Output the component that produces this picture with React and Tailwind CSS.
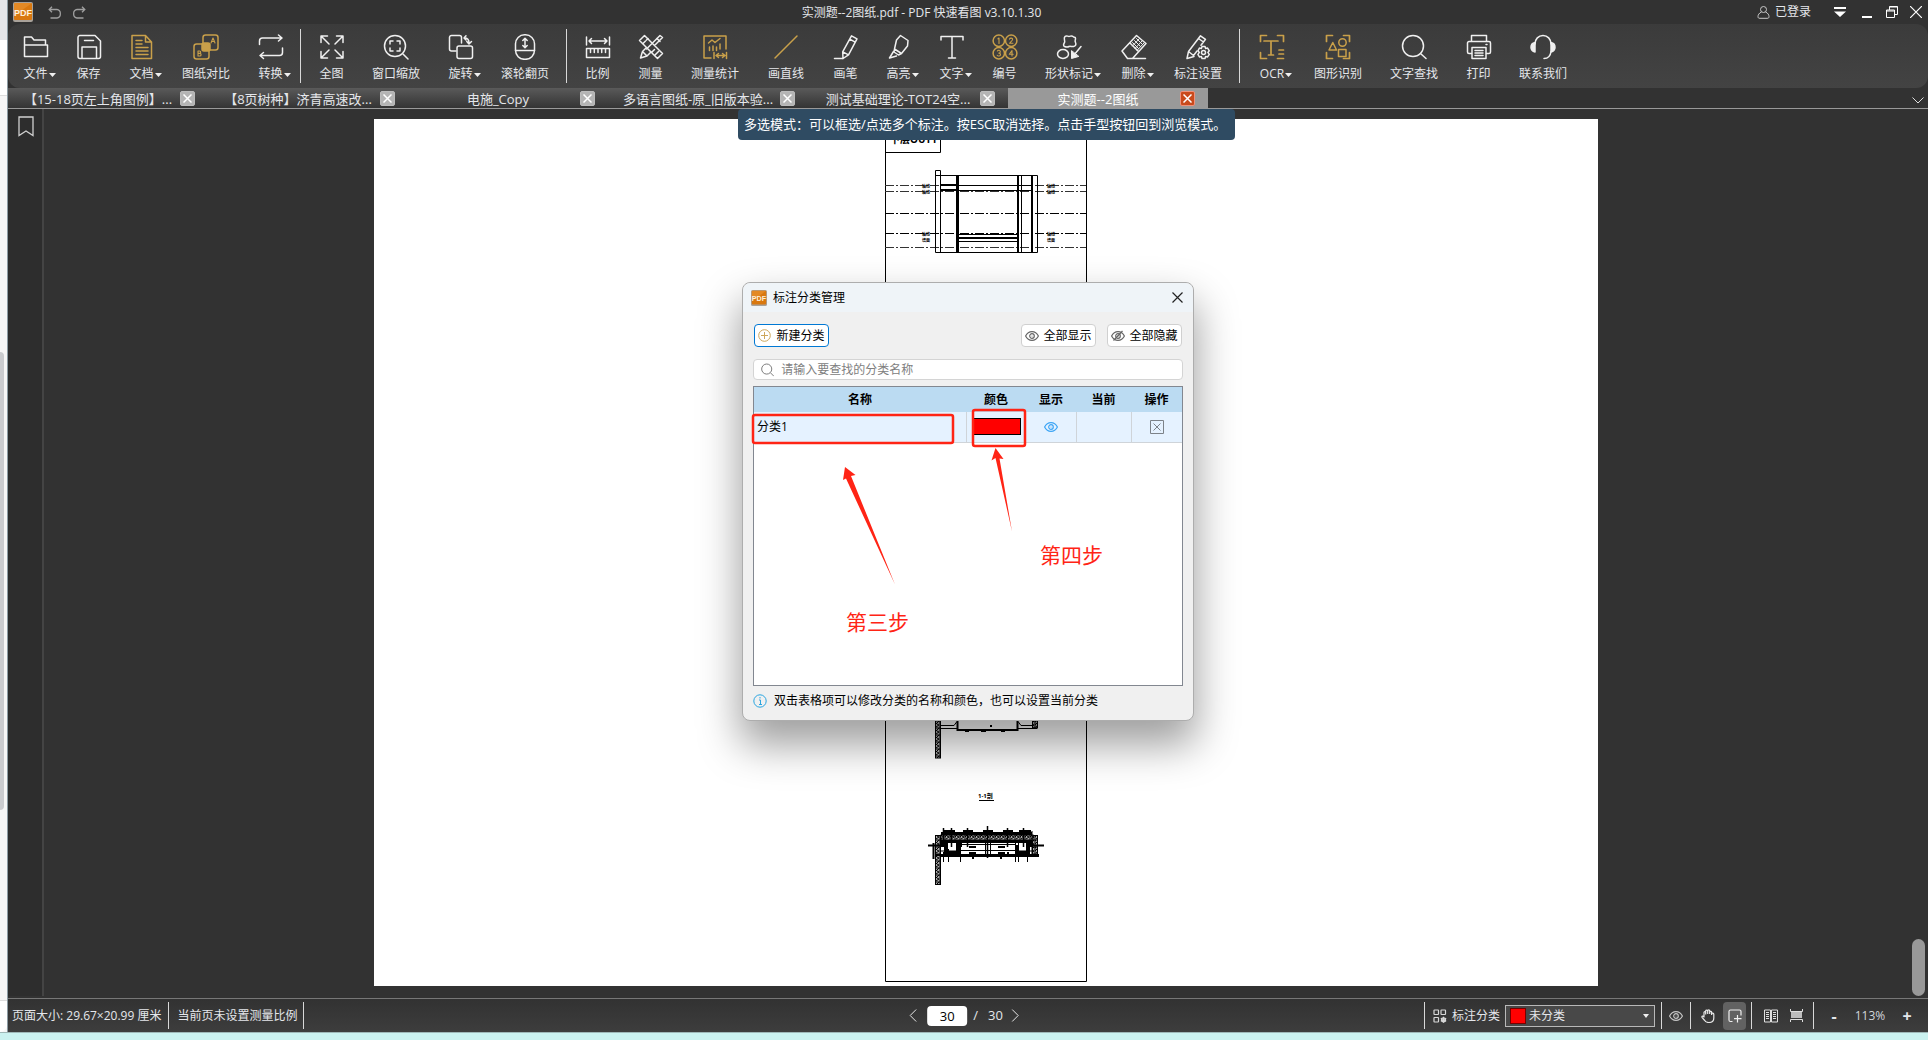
import { useState } from "react";

const GOLD = "#c9a04a";

function Icon({ size = 26, gold, children, ...rest }) {
  return (
    <svg
      width={size}
      height={size}
      viewBox="0 0 26 26"
      fill="none"
      stroke={gold ? GOLD : "#f0f0f0"}
      strokeWidth="1.5"
      strokeLinecap="round"
      strokeLinejoin="round"
      aria-hidden="true"
      {...rest}
    >
      {children}
    </svg>
  );
}

const icons = {
  file: <path d="M1.500 22.500V3h7l2.500 3h11.500v5M1.500 11h23v11.500h-23z" />,
  save: (
    <>
      <path d="M4 1.500h15l5.500 5.500v15.500a2 2 0 0 1-2 2h-18.500a2 2 0 0 1-2-2v-19a2 2 0 0 1 2-2z" />
      <path d="M6 24v-11h14.500v11M8.500 6.500h9" />
    </>
  ),
  doc: (
    <>
      <path d="M3 1.500h13.500l6 6.500v16.500h-19.500zM16.500 1.500v6.500h6" />
      <path d="M7 6.500h6M7 10h6M7 13.500h12M7 17h12M7 20.500h12" />
    </>
  ),
  compare: (
    <>
      <rect x="10" y="1" width="15" height="15" rx="2.500" />
      <rect x="1" y="10" width="15" height="15" rx="2.500" />
      <rect x="9" y="9" width="8" height="8" rx="2" fill={GOLD} />
      <path d="M18 9l2-5 2 5M18.700 7.500h2.600M5 17v5h1.800a1.300 1.300 0 0 0 0-2.600H5h1.500a1.200 1.200 0 0 0 0-2.400z" strokeWidth="1.100" />
    </>
  ),
  convert: (
    <>
      <path d="M1.500 10.500V7a3 3 0 0 1 3-3h19M20.500 1l3.500 3-3.500 3" />
      <path d="M24.500 14v4.500a3 3 0 0 1-3 3h-19M5.500 18.500L2 21.500l3.500 3" />
    </>
  ),
  full: <path d="M10 10L2 2M2 8.500V2h6.500M16 10l8-8M17.500 2H24v6.500M10 16l-8 8M2 17.500V24h6.500M16 16l8 8M24 17.500V24h-6.500" />,
  windowZoom: (
    <>
      <circle cx="12" cy="12" r="10.500" />
      <path d="M20 20l5 5M7 10V7h3M14 7h3v3M7 14v3h3M17 14v3h-3" />
    </>
  ),
  rotate: (
    <>
      <path d="M8 17H3.500a2 2 0 0 1-2-2V3.500a2 2 0 0 1 2-2h8a2 2 0 0 1 2 2V9" />
      <rect x="9" y="12" width="15.500" height="12.500" rx="2" />
      <path d="M16.500 4c3 0 4.500 2 4.500 5M18.800 7.500l2.200 2.500 2.500-2.500M18 1.800L16 4l2 2" />
    </>
  ),
  wheel: (
    <>
      <rect x="3.500" y="0.800" width="19" height="24.500" rx="9" />
      <path d="M3.500 16.500h19M13 4.500v9M10.800 6.500L13 4.200l2.200 2.300M10.800 11.500l2.200 2.300 2.200-2.300" />
    </>
  ),
  scale: (
    <>
      <path d="M1.500 3v8M24.500 3v8M4 7h18M6.500 4.500L4 7l2.500 2.500M19.500 4.500L22 7l-2.500 2.500" />
      <path d="M1.500 14.500h23v9h-23zM5.500 15v3.500M9.300 15v3.500M13 15v3.500M16.700 15v3.500M20.500 15v3.500" />
    </>
  ),
  measure: (
    <>
      <path d="M9.500 14.500L1.500 6.500l5-5 8 8M16.500 11.500L24.500 3.500l-2.500-2L8.500 15M14.500 9.500l10 10-5 5-10-10" />
      <path d="M5 9.500L7.500 7M8.500 6L10 4.500M14 18l2.500-2.500M17 21l3.500-3.500M19 4.500l3 3M4.500 17.500L2.500 24l6.500-2 4-4M4.500 17.500l4.500 4.500M4.500 17.500L8 14" />
    </>
  ),
  stats: (
    <>
      <path d="M9 24H2V2h22v13" />
      <path d="M6.500 9l3.500-3 3 2.500 5-4M7.500 13v3.500M11 12v4.500M14.500 13v3.500M18 10v5M12 18.500v6M24.500 18.500v6M14 21.500h9M16.500 19.500l-2.500 2 2.500 2M20.500 19.500l2.500 2-2.500 2" />
    </>
  ),
  line: <path d="M2 24L24 2" />,
  pen: (
    <>
      <path d="M18.500 1.800l5.500 3-8.500 16-5.500 3.700-.3-6.700zM9.800 17.800l5.700 3M16.800 5.200l5.400 3" />
      <path d="M1.500 24.500h8.500" />
    </>
  ),
  highlight: (
    <>
      <path d="M14.500 1.500l7.500 5-.5 5.500-6 7.500-7-4.500 2-9zM8.500 15l7 4.500-3 1.500-4.500-3z" />
      <path d="M7.500 17.500l-4 6.500 7-2" />
    </>
  ),
  text: <path d="M2 6V2.500h22V6M13 2.500v21M9.500 24h7" />,
  number: (
    <>
      <circle cx="6.800" cy="6.800" r="5.700" />
      <circle cx="19.200" cy="6.800" r="5.700" />
      <circle cx="6.800" cy="19.200" r="5.700" />
      <circle cx="19.200" cy="19.200" r="5.700" />
      <path
        d="M6 4.800l1-.8v5.500M17.500 5.200c.5-1.600 3.300-1.400 3.100.3-.2 1.300-2 2.300-3 3.800h3.300M5.400 17c.7-1.200 2.900-1 2.900.7 0 1-.9 1.400-1.500 1.400 1 0 1.700.6 1.700 1.400 0 1.800-2.500 2-3.300.8M20 22v-5.500l-2.700 3.800h3.900"
        strokeWidth="1.100"
      />
    </>
  ),
  shape: (
    <>
      <path d="M9 2.500c1.500-1.500 2.500 0 4 0s2.500-1.500 4 0 2.500 0 2.500 2-1 2 0 4 0 3.500-2 4-3-.8-4.500 0-3 .5-4.500 0-1-2.500 0-4-1.500-4 .5-6z" />
      <ellipse cx="7" cy="20" rx="5.500" ry="4.500" />
      <path d="M25 12.500L18 21" />
      <path d="M15.500 17V24.500l7-2z" fill="#f0f0f0" strokeWidth="1" />
    </>
  ),
  erase: (
    <>
      <path d="M1 17L15.500 1.500l9.500 8L11.500 24.500H6.500zM9 9l8.500 8.500M11.500 24.500h13" />
      <path d="M15.500 4.500l6 6M13.500 6.500l6 6M11.500 8.500l6 6M18.500 4.500l-7 7.500M21 7l-7 7.500M23 9l-7 7.500" strokeWidth="1" />
    </>
  ),
  annotate: (
    <>
      <path d="M9 22.500l-7 2 1.500-7L15.500 1.800l5 3.500-4.500 6M13.500 4.500l5 3.500M3.500 17.500l5 4 3.500-4.500" />
      <circle cx="18.500" cy="18.500" r="2" />
      <path d="M17 12.500h3l.6 2 2-.4 1.700 2.700-1.500 1.600 1.500 2-1.700 2.500-2-.4-.6 2h-3l-.6-2-2 .4-1.500-2.500 1.500-2-1.500-1.600 1.500-2.700 2 .4z" />
    </>
  ),
  ocr: (
    <path d="M1.500 7.500v-6h6M18.500 1.500h6v6M1.500 18.500v6h6M18.500 24.500h6M5 7h14M12 7v14M20 16h4.500M20 20h4.500M9.500 21h5" strokeWidth="1.700" />
  ),
  shapes: (
    <>
      <path d="M1.500 7.500v-6h6M18.500 1.500h6v6M1.500 18.500v6h6M18.500 24.500h6v-6" strokeWidth="1.700" />
      <circle cx="17.500" cy="8.500" r="3.700" />
      <path d="M4 16l3.800-7.500L11.500 16zM13.500 15.500h7.500v7h-7.500z" />
    </>
  ),
  search: (
    <>
      <circle cx="12" cy="12" r="10.500" />
      <path d="M19.500 19.500l5.500 5" />
    </>
  ),
  print: (
    <>
      <path d="M5.500 7V1.500h15V7M5.500 19.500H3a1.500 1.500 0 0 1-1.500-1.500V9A1.500 1.500 0 0 1 3 7.500h20A1.500 1.500 0 0 1 24.500 9v9a1.500 1.500 0 0 1-1.500 1.500h-2.500" />
      <path d="M6 13.500h14v11H6zM9 16.500h8M9 19h8M9 21.500h8M20 10.500h1" />
    </>
  ),
  contact: (
    <>
      <path d="M5 10C5 5 8.500 1.500 13 1.500S21 5 21 10M21 17.500c-.5 4-3 7-7 7" />
      <path d="M5 8.500v9.500c-2.500-.5-4-2.500-4-4.700S2.500 9 5 8.500zM21 8.500v9.500c2.500-.5 4-2.500 4-4.700S23.500 9 21 8.500z" fill="#f0f0f0" />
    </>
  ),
};

const groups = [
  [
    { label: "文件", icon: "file", menu: true },
    { label: "保存", icon: "save" },
    { label: "文档", icon: "doc", menu: true, gold: true },
    { label: "图纸对比", icon: "compare", gold: true },
    { label: "转换", icon: "convert", menu: true },
  ],
  [
    { label: "全图", icon: "full" },
    { label: "窗口缩放", icon: "windowZoom" },
    { label: "旋转", icon: "rotate", menu: true },
    { label: "滚轮翻页", icon: "wheel" },
  ],
  [
    { label: "比例", icon: "scale" },
    { label: "测量", icon: "measure" },
    { label: "测量统计", icon: "stats", gold: true },
    { label: "画直线", icon: "line", gold: true, width: "w-[66px]" },
    { label: "画笔", icon: "pen" },
    { label: "高亮", icon: "highlight", menu: true },
    { label: "文字", icon: "text", menu: true },
    { label: "编号", icon: "number", gold: true },
    { label: "形状标记", icon: "shape", menu: true },
    { label: "删除", icon: "erase", menu: true },
    { label: "标注设置", icon: "annotate" },
  ],
  [
    { label: "OCR", icon: "ocr", menu: true, gold: true, width: "w-14" },
    { label: "图形识别", icon: "shapes", gold: true },
    { label: "文字查找", icon: "search" },
    { label: "打印", icon: "print" },
    { label: "联系我们", icon: "contact" },
  ],
];

const toolWidth = { 2: "w-[53px]", 4: "w-[76px]" };

const tabs = [
  "【15-18页左上角图例】...",
  "【8页树种】济青高速改...",
  "电施_Copy",
  "多语言图纸-原_旧版本验...",
  "测试基础理论-TOT24空...",
  "实测题--2图纸",
];

function Logo({ size }) {
  return (
    <svg width={size} height={size} viewBox="0 0 20 20" aria-hidden="true">
      <rect width="20" height="20" rx="2" fill="#a9a29a" />
      <rect x="1" y="1" width="18" height="17" rx="1" fill="#d9780f" />
      <path d="M1 1h18L1 14z" fill="#ee9a3c" opacity="0.5" />
      <text x="10" y="14" textAnchor="middle" fontSize="9" fontWeight="700" fill="#fdf0dc" fontFamily="Liberation Sans, sans-serif">
        PDF
      </text>
    </svg>
  );
}

function Eye({ color, off }) {
  return (
    <svg width="14" height="14" viewBox="0 0 14 14" fill="none" stroke={color} strokeWidth="1.200" aria-hidden="true">
      <path d="M.6 7C3.500 1.200 10.500 1.200 13.400 7 10.500 12.800 3.500 12.800.6 7z" />
      <circle cx="7" cy="7" r="2.300" />
      <circle cx="7" cy="7" r="0.500" fill={color} stroke="none" />
      {off && <path d="M2.500 11.500l9-9.500" />}
    </svg>
  );
}

function TitleBar() {
  return (
    <header className="flex h-6 items-center bg-[#323232] pl-[5px] pr-[6px] text-gray-200">
      <div className="flex items-center gap-3">
        <Logo size={20} />
        <button aria-label="撤销" className="ml-[3px]">
          <svg width="13" height="13" viewBox="0 0 13 13" fill="none" stroke="#a0a0a0" strokeWidth="1.300">
            <path d="M4 .7L1.200 3.500 4 6.300M1.200 3.500H9a3.500 3.500 0 0 1 3.300 3.800V8.200A3.500 3.500 0 0 1 9 12H2.500" />
          </svg>
        </button>
        <button aria-label="重做">
          <svg width="13" height="13" viewBox="0 0 13 13" fill="none" stroke="#a0a0a0" strokeWidth="1.300">
            <path d="M9 .7l2.800 2.800L9 6.300M11.800 3.500H4A3.500 3.500 0 0 0 .7 7.300v.9A3.500 3.500 0 0 0 4 12h6.500" />
          </svg>
        </button>
      </div>
      <h1 className="min-w-0 flex-1 truncate pt-px text-center">实测题--2图纸.pdf - PDF 快速看图 v3.10.1.30</h1>
      <div className="flex items-center">
        <button className="mr-[23px] flex items-center gap-[5px]">
          <svg width="13" height="13" viewBox="0 0 13 13" fill="none" stroke="#c8c8c8">
            <circle cx="6.500" cy="3.500" r="3" />
            <path d="M4.500 6C2 7 1 9 1 10.500S1.500 12.300 3 12.300h7c1.500 0 2-.3 2-1.800S11 7 8.500 6" />
          </svg>
          已登录
        </button>
        <button aria-label="菜单" className="mr-4">
          <svg width="12" height="12" viewBox="0 0 12 12" fill="#fff">
            <path d="M0 1h12v2H0zM0 5.500h12L6 11z" />
          </svg>
        </button>
        <button aria-label="最小化" className="mr-[14px]">
          <svg width="10" height="12" viewBox="0 0 10 12">
            <path d="M0 10h10v2H0z" fill="#fff" />
          </svg>
        </button>
        <button aria-label="还原" className="mr-3">
          <svg width="12" height="12" viewBox="0 0 12 12" fill="none" stroke="#fff">
            <path d="M3.500 4V.5h8v8H8.500M3.500 1h8M.5 4h8v7.500h-8zM.5 5h8" />
          </svg>
        </button>
        <button aria-label="关闭">
          <svg width="12" height="12" viewBox="0 0 12 12" stroke="#fff" strokeWidth="1.200">
            <path d="M0 0l12 12M12 0L0 12" />
          </svg>
        </button>
      </div>
    </header>
  );
}

function ToolBar() {
  return (
    <div className="bg-[#323232]">
      <nav className="flex h-16 items-stretch rounded-xl bg-linear-to-b from-[#3b3b3b] to-[#434343] pl-px">
        {groups.map((group, g) => (
          <div key={g} className="flex">
            {g > 0 && <div className="my-[5px] ml-[3px] mr-1 w-px bg-[#d8d8d8]" />}
            {group.map((tool) => (
              <button
                key={tool.label}
                className={`${tool.width || toolWidth[tool.label.length]} flex flex-col items-center gap-[6px] pt-[10px] text-gray-200`}
              >
                <Icon gold={tool.gold}>{icons[tool.icon]}</Icon>
                <span className="flex items-center whitespace-nowrap leading-4">
                  {tool.label}
                  {tool.menu && (
                    <svg width="7" height="4" viewBox="0 0 7 4" className="-mr-2 ml-px mt-[2px]" fill="#f0f0f0">
                      <path d="M0 0h7L3.500 4z" />
                    </svg>
                  )}
                </span>
              </button>
            ))}
          </div>
        ))}
      </nav>
    </div>
  );
}

function TabBar() {
  const [active, setActive] = useState(5);

  return (
    <div className="flex h-[21px] items-stretch justify-between border-b border-[#999] bg-[#323232] text-[13px]">
      <div className="flex">
        {tabs.map((tab, i) => (
          <div
            key={tab}
            className={`flex w-[200px] items-center ${i === active ? "bg-[#999] text-white" : "bg-linear-to-b from-[#5a5a5a] to-[#343434] text-gray-200"}`}
          >
            <button onClick={() => setActive(i)} className="min-w-0 flex-1 whitespace-nowrap pl-2 pt-[2px] text-center leading-5">
              {tab}
            </button>
            <button
              aria-label={`关闭 ${tab}`}
              className={`mr-[13px] flex size-[15px] items-center justify-center rounded-[2px] border ${i === active ? "border-[#f0907a] bg-[#c94a1c]" : "border-[#bbb] bg-[#b4b4b4]"}`}
            >
              <svg width="9" height="9" viewBox="0 0 9 9" stroke="#fff" strokeWidth="1.500">
                <path d="M.5.5l8 8M8.500.5l-8 8" />
              </svg>
            </button>
          </div>
        ))}
      </div>
      <button aria-label="更多标签" className="mr-[4px] pt-1">
        <svg width="12" height="7" viewBox="0 0 12 7" fill="none" stroke="#e0e0e0">
          <path d="M.5.5L6 6 11.500.5" />
        </svg>
      </button>
    </div>
  );
}

function SectionMarks({ x, y, lines }) {
  return (
    <text x={x} y={y} fontSize="4" fontWeight="700" fill="#000" stroke="none">
      {lines.map((line, i) => (
        <tspan key={i} x={x} dy={i ? 6 : 0}>
          {line}
        </tspan>
      ))}
    </text>
  );
}

function Drawing() {
  return (
    <svg width="202" height="867" viewBox="0 0 202 867" fill="none" stroke="#000" className="mx-auto block" aria-hidden="true">
      <defs>
        <pattern id="hatch" width="5" height="7" patternUnits="userSpaceOnUse">
          <rect width="5" height="7" fill="#aaa" />
          <path d="M0 4L4 0M1 6l3-2M0 1l1-1M2 3l2 1" stroke="#000" />
        </pattern>
      </defs>
      <path d="M.5 0v862.500h201V0M.5 33.500h55V0" />
      <text x="5" y="24" fontSize="10" fontWeight="700" fill="#000" stroke="none">
        下层OUT1
      </text>

      <g strokeDasharray="9 2 2 2">
        <path d="M0 66.500h201M0 72.500h201M0 128.500h201" stroke="#333" />
        <path d="M0 94.500h201M0 114.500h201" />
      </g>
      <path d="M50.500 51.500h5v82M50.500 51.500v82h102v-77h-102M71.500 56.500v77M136.500 56.500v77" />
      <path d="M73 56v77M133 56v77M147 56v77" strokeWidth="2" />
      <path d="M55 66.500h92M55 71.500h92M147.500 64v9" />
      <path d="M56 71h17M56 66h17" strokeWidth="2" />
      <path d="M73 115.500h59M73 122.500h59" />
      <path d="M73 119h59" strokeWidth="2" />
      <SectionMarks x={37} y={69} lines={["轴线", "轴线"]} />
      <SectionMarks x={162} y={69} lines={["轴线", "轴线"]} />
      <SectionMarks x={37} y={117} lines={["轴线", "墙面"]} />
      <SectionMarks x={162} y={117} lines={["轴线", "墙面"]} />

      <rect x="50.500" y="590" width="5" height="49" fill="url(#hatch)" />
      <rect x="147.500" y="590" width="5" height="19" fill="url(#hatch)" />
      <path d="M56 609.500h16M133 609.500h19M56 606.500h13l3-4M148 606.500h-12l-3-4" />
      <path d="M72.500 595v16h60v-16M80 612h4M96 612h5M116 612h4M105 607h2" strokeWidth="2" />

      <text x="93" y="679" fontSize="6" fontWeight="700" fill="#000" stroke="none">
        1-1剖
      </text>
      <path d="M94 681.500h15" />

      <rect x="50.500" y="716.500" width="5" height="49" fill="url(#hatch)" />
      <rect x="147.500" y="716.500" width="5" height="20" fill="url(#hatch)" />
      <rect x="56" y="716" width="92" height="6" fill="url(#hatch)" />
      <path d="M56 714.500h91M56 722.500h91" strokeWidth="3" />
      <path d="M58 712h12M78 712h10M98 712h10M118 712h10M134 712h12" strokeWidth="2" />
      <path d="M43 726.500h14M148 726.500h11M48.500 724v16M50 736h6" strokeWidth="2" />
      <path
        d="M58.500 709v14M66.500 709v19M82.500 709v19M102.500 707v32M122.500 709v19M138.500 709v19"
        strokeWidth="1.500"
      />
      <path d="M147 712v24M58.500 733v10M63.500 730v13M75.500 724v19M130.500 724v19M133.500 724v19M142.500 730v13M100.500 724v14M105.500 724v14" />
      <path d="M56 736.500h98" strokeWidth="3" />
      <path d="M75 731.500h56M76 725.500h54M56 732h16M132 732h16" />
      <path d="M56 726h5v8h12v-8h4M148 726h-5v8h-11v-8" strokeWidth="4" />
      <path d="M84 728h7M84 734h7M113 728h7M113 734h7M122 734h2M87 739h2M115 739h2" strokeWidth="2" />
    </svg>
  );
}

function CategoryDialog() {
  const [keyword, setKeyword] = useState("");
  const [open, setOpen] = useState(true);

  if (!open) return null;

  return (
    <section
      role="dialog"
      aria-labelledby="dialog-title"
      className="absolute left-1/2 top-[282px] w-[452px] -translate-x-1/2 rounded-lg border border-[#adadad] bg-[#f0f0f0] text-black shadow-[0_22px_42px_2px_rgba(0,0,0,0.38)]"
    >
      <header className="flex h-[29px] items-center rounded-t-lg bg-[#eff4f8] pl-2 pr-[10px]">
        <Logo size={16} />
        <h2 id="dialog-title" className="ml-[6px] flex-1">
          标注分类管理
        </h2>
        <button aria-label="关闭" onClick={() => setOpen(false)}>
          <svg width="11" height="11" viewBox="0 0 11 11" stroke="#222" strokeWidth="1.200">
            <path d="M.5.5l10 10M10.500.5l-10 10" />
          </svg>
        </button>
      </header>

      <div className="px-[10px] pb-[11px] pt-3">
        <div className="flex px-px">
          <button className="flex h-[23px] w-[75px] items-center justify-center gap-[5px] rounded border border-[#0078d4] bg-white">
            <svg width="13" height="13" viewBox="0 0 13 13" fill="none" stroke="#cda65a" aria-hidden="true">
              <circle cx="6.500" cy="6.500" r="5.800" />
              <path d="M3 6.500h7M6.500 3v7" />
            </svg>
            新建分类
          </button>
          <button className="ml-auto mr-[11px] flex h-[23px] w-[75px] items-center justify-center gap-1 rounded border border-[#d0d0d0] bg-white">
            <Eye color="#666" />
            全部显示
          </button>
          <button className="flex h-[23px] w-[75px] items-center justify-center gap-1 rounded border border-[#d0d0d0] bg-white">
            <Eye color="#666" off />
            全部隐藏
          </button>
        </div>

        <label className="mt-3 flex h-[21px] items-center gap-[7px] rounded-sm border border-[#d4d4d4] bg-white pl-[7px]">
          <svg width="14" height="14" viewBox="0 0 14 14" fill="none" stroke="#777" aria-hidden="true">
            <circle cx="6" cy="6" r="5.300" />
            <path d="M10 10l3.500 3.500" />
          </svg>
          <input
            aria-label="查找分类"
            value={keyword}
            onChange={(e) => setKeyword(e.target.value)}
            placeholder="请输入要查找的分类名称"
            className="w-full bg-transparent outline-none placeholder:text-[#808080]"
          />
        </label>

        <div className="mt-[6px] h-[300px] border border-[#828790] bg-white">
          <table className="w-full table-fixed border-collapse">
            <thead>
              <tr className="h-[25px] bg-[#bbdbf2]">
                <th className="w-[212px]">名称</th>
                <th className="w-[60px]">颜色</th>
                <th className="w-[50px]">显示</th>
                <th className="w-[55px]">当前</th>
                <th>操作</th>
              </tr>
            </thead>
            <tbody>
              <tr className="h-[30px] bg-[#e5f2ff]">
                <td className="border-b border-r border-[#cfd4d9] pl-[3px]">分类1</td>
                <td className="border-b border-[#cfd4d9] px-[5px]">
                  <div className="h-[17px] border border-black bg-[#ff0000]" />
                </td>
                <td className="border-b border-r border-[#cfd4d9]">
                  <button aria-label="显示" className="mx-auto block">
                    <Eye color="#3da5f5" />
                  </button>
                </td>
                <td className="border-b border-r border-[#cfd4d9]" />
                <td className="border-b border-[#cfd4d9]">
                  <button aria-label="删除分类" className="mx-auto block">
                    <svg width="14" height="14" viewBox="0 0 14 14" fill="none" stroke="#7c8288">
                      <path d="M.5.5h13v13H.5zM3.500 3.500l7 7M10.500 3.500l-7 7" />
                    </svg>
                  </button>
                </td>
              </tr>
            </tbody>
          </table>
        </div>

        <p className="mt-[7px] flex items-center gap-[7px]">
          <svg width="14" height="14" viewBox="0 0 14 14" fill="none" stroke="#2aa5e0" aria-hidden="true">
            <circle cx="7" cy="7" r="6.200" />
            <path d="M6 6h1.500v4M6 10.500h3M7 3v1.500" />
          </svg>
          双击表格项可以修改分类的名称和颜色，也可以设置当前分类
        </p>
      </div>

      <svg width="450" height="434" viewBox="743 283 450 434" className="pointer-events-none absolute inset-0 overflow-visible" aria-hidden="true">
        <g fill="none" stroke="#ff2415" strokeWidth="2.500">
          <rect x="753" y="415" width="200" height="28" rx="2" />
          <rect x="973" y="410" width="52" height="36" rx="2" />
        </g>
        <path d="M845 467l10.500 8-4.500 1 44 108.500L846 478.500l-3 1.500z" fill="#ff2415" />
        <path d="M995.500 448l8 11-4-.5 12.500 73-16.500-73.500-4 2.500z" fill="#ff2415" />
        <text x="846" y="630" fontSize="21" fill="#ff2415">
          第三步
        </text>
        <text x="1040" y="563" fontSize="21" fill="#ff2415">
          第四步
        </text>
      </svg>
    </section>
  );
}

function Viewer() {
  return (
    <main className="relative flex flex-1 items-stretch bg-[#323232]">
      <aside className="mb-[2px] w-9 border-r-2 border-[#444] bg-[#2d2d2d] pl-[10px] pt-[7px]">
        <button aria-label="书签">
          <svg width="16" height="21" viewBox="0 0 16 21" fill="none" stroke="#d0d0d0" strokeWidth="1.300">
            <path d="M1 1h14v18.500L8 15l-7 4.500z" />
          </svg>
        </button>
      </aside>
      <div className="relative flex-1 pb-3 pt-[10px]">
        <div className="mx-auto h-full w-[65%] bg-white">
          <Drawing />
        </div>
        <div className="absolute bottom-[2px] right-[3px] h-[57px] w-[13px] rounded-full bg-[#999]" />
      </div>
      <p className="absolute left-1/2 top-0 w-[497px] translate-x-[-230px] whitespace-nowrap rounded-sm bg-[#2f4b62] pl-[6px] text-[13px] leading-[31px] text-white">
        多选模式：可以框选/点选多个标注。按ESC取消选择。点击手型按钮回到浏览模式。
      </p>
    </main>
  );
}

function Divider() {
  return <div className="my-[3px] w-px self-stretch bg-[#d8d8d8]" />;
}

function StatusBar() {
  const [page, setPage] = useState("30");

  return (
    <footer className="relative flex h-[34px] items-center justify-between border-t border-[#777] bg-linear-to-b from-[#323232] to-[#3d3d3d] text-gray-200">
      <div className="flex items-center self-stretch pl-1">
        <span className="pt-px">页面大小: 29.67×20.99 厘米</span>
        <div className="ml-[7px] flex self-stretch">
          <Divider />
        </div>
        <span className="ml-2 mr-[6px] pt-px">当前页未设置测量比例</span>
        <Divider />
      </div>

      <div className="absolute left-1/2 flex -translate-x-1/2 items-center pr-2">
        <button aria-label="上一页" className="mr-[10px]">
          <svg width="8" height="13" viewBox="0 0 8 13" fill="none" stroke="#e8e8e8">
            <path d="M7 .5l-6 6 6 6" />
          </svg>
        </button>
        <input
          aria-label="页码"
          value={page}
          onChange={(e) => setPage(e.target.value)}
          className="h-5 w-10 rounded-sm bg-white text-center text-[13px] text-black outline-none"
        />
        <span className="ml-[6px] pt-px text-[13px]">/</span>
        <span className="ml-[10px] mr-2 pt-px text-[13px]">30</span>
        <button aria-label="下一页">
          <svg width="8" height="13" viewBox="0 0 8 13" fill="none" stroke="#e8e8e8">
            <path d="M1 .5l6 6-6 6" />
          </svg>
        </button>
      </div>

      <div className="flex items-center self-stretch">
        <Divider />
        <label htmlFor="category" className="ml-2 flex items-center gap-[5px] pt-px">
          <svg width="14" height="14" viewBox="0 0 14 14" fill="none" stroke="#d8d8d8" strokeWidth="1.200" aria-hidden="true">
            <rect x="1" y="1" width="4.500" height="4.500" rx="0.500" />
            <rect x="8" y="1" width="4.500" height="4.500" rx="0.500" />
            <rect x="1" y="8.500" width="4.500" height="4.500" rx="0.500" />
            <path d="M10.500 7.800v6M7.800 9.300l5.400 3M7.800 12.300l5.400-3" />
            <circle cx="10.500" cy="10.800" r="2" />
          </svg>
          标注分类
        </label>
        <div className="relative ml-[5px] flex items-center">
          <select id="category" className="h-[22px] w-[150px] appearance-none border border-[#b8b8b8] bg-[#484848] pl-[23px] leading-4 outline-none">
            <option>未分类</option>
            <option>分类1</option>
          </select>
          <span className="pointer-events-none absolute left-[5px] size-4 border border-[#700] bg-[#ff0000]" />
          <svg width="6" height="4" viewBox="0 0 6 4" fill="#f0f0f0" className="pointer-events-none absolute right-[6px]">
            <path d="M0 0h6L3 4z" />
          </svg>
        </div>
        <div className="ml-[6px] flex self-stretch">
          <Divider />
        </div>
        <button aria-label="显示标注" className="mx-[7px]">
          <Eye color="#c4c4c4" />
        </button>
        <Divider />
        <button aria-label="手型" className="ml-[10px] mr-2">
          <svg width="14" height="14" viewBox="0 0 14 14" fill="none" stroke="#e8e8e8" strokeWidth="1.200" strokeLinejoin="round">
            <path d="M3 8V3.500c0-1.200 1.700-1.200 1.700 0V2c0-1.200 2-1.200 2 0v-.3c0-1.200 2-1.200 2 0V3c0-1 1.900-1 1.900 0v2c0-1.200 2.200-1.200 2.200.2V9c0 3-2 4.500-5 4.500-2.500 0-3.700-1-4.500-2.500L1 8.300C.5 7 2 6.500 3 8z" />
            <path d="M4.700 3.500v2M6.700 2v3M8.700 3v2M10.600 4.500V6" />
          </svg>
        </button>
        <button aria-label="多选" className="mr-[5px] flex h-7 w-[23px] items-center justify-center rounded-sm bg-[#626262]">
          <svg width="14" height="14" viewBox="0 0 14 14" fill="none" stroke="#f0f0f0" strokeWidth="1.200">
            <path d="M4.500 12.500h-2c-1 0-1.500-.5-1.500-1.500V2.500C1 1.500 1.500 1 2.500 1h9c1 0 1.500.5 1.500 1.500v4M9.500 6v7.500M6 9.700h7.500" />
          </svg>
        </button>
        <Divider />
        <button aria-label="双页" className="mx-3">
          <svg width="14" height="14" viewBox="0 0 14 14" fill="none" stroke="#e0e0e0">
            <path d="M.5 1h6v12h-6zM7.500 1h6v12h-6zM2 3.500h3M2 5.500h3M2 7.500h3M2 9.500h3M9 3.500h3M9 5.500h3M9 7.500h3M9 9.500h3" />
          </svg>
        </button>
        <button aria-label="连续页" className="mr-[10px]">
          <svg width="13" height="13" viewBox="0 0 13 13" aria-hidden="true">
            <path d="M1 3h11v6H1z" fill="#bdbdbd" />
            <path d="M.5 0v2.500h12V0M.5 13v-2.500h12V13" fill="none" stroke="#e0e0e0" />
          </svg>
        </button>
        <Divider />
        <button className="w-10 text-base font-bold leading-4">-</button>
        <span className="w-8 pt-px text-center text-gray-300">113%</span>
        <button className="w-[42px] text-base font-bold leading-4">+</button>
      </div>
    </footer>
  );
}

export default function App() {
  return (
    <div className="flex min-h-screen flex-col bg-[#cbf2f0] font-['Open_Sans','Noto_Sans_CJK_SC',sans-serif] text-xs">
      <div className="flex flex-1">
        <div className="flex w-2 flex-col border-r border-[#8c9ba3] bg-[#f6f6f6]">
          <div className="h-10 bg-[#e5e6e9]" />
          <div className="h-14 border-b border-[#ddd] bg-white" />
          <div className="mt-64 h-[458px] w-1 rounded-r-sm bg-[#cacbce]" />
          <div className="mt-auto h-8 rounded-br-lg border-t border-[#ddd] bg-white" />
        </div>
        <div className="relative flex min-w-0 flex-1 flex-col">
          <TitleBar />
          <ToolBar />
          <TabBar />
          <Viewer />
          <StatusBar />
          <CategoryDialog />
        </div>
      </div>
      <div className="h-2 border-t border-[#9fb8b8]" />
    </div>
  );
}
